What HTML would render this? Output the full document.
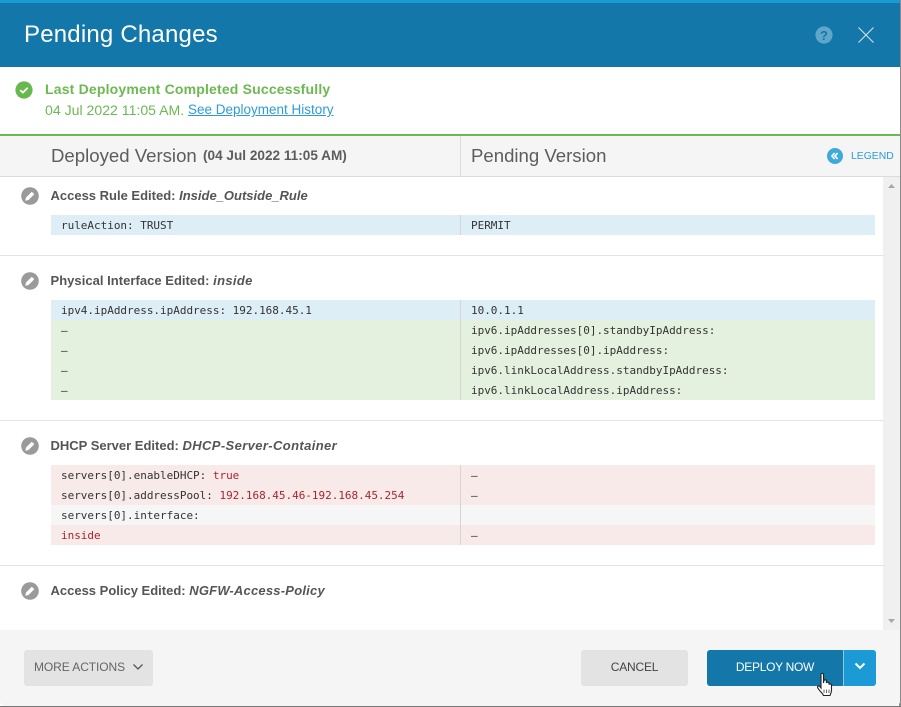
<!DOCTYPE html>
<html>
<head>
<meta charset="utf-8">
<style>
html,body{margin:0;padding:0;width:901px;height:707px;overflow:hidden;background:#fff;font-family:"Liberation Sans",sans-serif}
*{box-sizing:border-box}
.a{position:absolute;white-space:nowrap}
#dlg{position:absolute;left:0;top:0;width:900px;height:706px;background:#fff;overflow:hidden;border-radius:0 0 5px 5px}
.row{position:absolute;left:51px;width:824px;height:20px;font:11px/20px "DejaVu Sans Mono","Liberation Mono",monospace;color:#333}
.row span{position:absolute;top:1px;white-space:pre}
.row .l{left:10px;letter-spacing:-.02px}
.row .r{left:420px;letter-spacing:-.02px}
.row i{position:absolute;left:409px;top:0;width:1px;height:20px;background:#d5d5d5}
.row b{font-weight:normal;color:#a8252f}
.b{background:#deeef7}.g{background:#e5f1df}.p{background:#f9eaea}.w{background:#f6f6f6}
.h{position:absolute;left:50.500px;font-size:13px;font-weight:bold;color:#555;white-space:nowrap;line-height:16px}
.h em{font-style:italic}
.sep{position:absolute;left:0;width:884px;height:1px;background:#e3e3e3}
.ic{position:absolute;left:21px;width:18px;height:18px}
.btn{position:absolute;top:650px;height:36px;border-radius:3px;font-size:12px;line-height:34px;text-align:center}
</style>
</head>
<body>
<div style="position:absolute;left:899px;top:0;width:2px;height:707px;background:#8a8a8a"></div>
<div style="position:absolute;left:0;top:706px;width:901px;height:1px;background:#777"></div>
<div id="dlg">
  <div class="a" style="left:0;top:0;width:900px;height:3px;background:#1c9ad6"></div>
  <div class="a" style="left:0;top:3px;width:900px;height:64px;background:#1377a9"></div>
  <div class="a" style="left:24px;top:20px;font-size:24px;line-height:30px;color:#fff;letter-spacing:.2px">Pending Changes</div>
  <svg class="a" style="left:815px;top:26px" width="18" height="18" viewBox="0 0 18 18"><circle cx="9" cy="9" r="8.600" fill="#5fa6c9"/><text x="9" y="14" text-anchor="middle" font-family="Liberation Sans" font-weight="bold" font-size="13" fill="#1377a9">?</text></svg>
  <svg class="a" style="left:858px;top:27px" width="16" height="16" viewBox="0 0 16 16"><path d="M.5.5 15.500 15.500M15.500.5 .5 15.500" stroke="#cfe3ee" stroke-width="1.100" fill="none"/></svg>

  <svg class="a" style="left:15px;top:81px" width="18" height="18" viewBox="0 0 18 18"><circle cx="9" cy="9" r="8.600" fill="#67b84f"/><path d="M5.300 9.200 7.900 11.600 12.700 6.800" stroke="#fff" stroke-width="1.800" fill="none"/></svg>
  <div class="a" style="left:45px;top:81px;font-size:14px;font-weight:bold;line-height:16px;color:#6cb952;letter-spacing:.18px">Last Deployment Completed Successfully</div>
  <div class="a" style="left:45px;top:102px;font-size:14.100px;line-height:16px;color:#6cb952">04 Jul 2022 11:05 AM.</div>
  <div class="a" style="left:188px;top:102px;font-size:13.500px;line-height:16px;color:#2b9cd8;text-decoration:underline">See Deployment History</div>

  <div class="a" style="left:0;top:134px;width:900px;height:2px;background:#6cb952"></div>
  <div class="a" style="left:0;top:136px;width:900px;height:41px;background:#f5f5f5;border-bottom:1px solid #dcdcdc"></div>
  <div class="a" style="left:460px;top:136px;width:1px;height:40px;background:#dcdcdc"></div>
  <div class="a" style="left:51px;top:145px;font-size:18.600px;line-height:22px;color:#5c5c5c">Deployed Version</div>
  <div class="a" style="left:203px;top:148px;font-size:13.600px;line-height:16px;font-weight:bold;color:#5c5c5c">(04 Jul 2022 11:05 AM)</div>
  <div class="a" style="left:471px;top:145px;font-size:18.600px;line-height:22px;color:#5c5c5c">Pending Version</div>
  <svg class="a" style="left:827px;top:148px" width="16" height="16" viewBox="0 0 16 16"><circle cx="8" cy="8" r="8" fill="#3fa9dc"/><path d="M7.600 5 5 8 7.600 11M10.600 5 8 8 10.600 11" stroke="#fff" stroke-width="1.700" fill="none"/></svg>
  <div class="a" style="left:851px;top:150px;font-size:10.400px;line-height:14px;color:#2b9cd8">LEGEND</div>

  <div class="a" style="left:883px;top:177px;width:17px;height:453px;background:#f0f0f0"></div>
  <svg class="a" style="left:883px;top:182px" width="17" height="8" viewBox="0 0 17 8"><path d="M5 6 8.500 2 12 6Z" fill="#a8a8a8"/></svg>
  <svg class="a" style="left:883px;top:617px" width="17" height="8" viewBox="0 0 17 8"><path d="M5 2 8.500 6 12 2Z" fill="#a8a8a8"/></svg>

  <svg class="ic" style="top:187px" viewBox="0 0 18 18"><circle cx="9" cy="9" r="8.800" fill="#9a9a9a"/><path d="M4.300 13.700 5 10.500 10.800 4.700 13.300 7.200 7.500 13Z" fill="#fff"/></svg>
  <div class="h" style="top:188px">Access Rule Edited: <em>Inside_Outside_Rule</em></div>
  <div class="row b" style="top:215px"><span class="l">ruleAction: TRUST</span><i></i><span class="r">PERMIT</span></div>
  <div class="sep" style="top:255px"></div>

  <svg class="ic" style="top:272px" viewBox="0 0 18 18"><circle cx="9" cy="9" r="8.800" fill="#9a9a9a"/><path d="M4.300 13.700 5 10.500 10.800 4.700 13.300 7.200 7.500 13Z" fill="#fff"/></svg>
  <div class="h" style="top:273px;letter-spacing:.03px">Physical Interface Edited: <em style="letter-spacing:.33px">inside</em></div>
  <div class="row b" style="top:300px"><span class="l">ipv4.ipAddress.ipAddress: 192.168.45.1</span><i></i><span class="r">10.0.1.1</span></div>
  <div class="row g" style="top:320px"><span class="l">–</span><i></i><span class="r">ipv6.ipAddresses[0].standbyIpAddress:</span></div>
  <div class="row g" style="top:340px"><span class="l">–</span><i></i><span class="r">ipv6.ipAddresses[0].ipAddress:</span></div>
  <div class="row g" style="top:360px"><span class="l">–</span><i></i><span class="r">ipv6.linkLocalAddress.standbyIpAddress:</span></div>
  <div class="row g" style="top:380px"><span class="l">–</span><i></i><span class="r">ipv6.linkLocalAddress.ipAddress:</span></div>
  <div class="sep" style="top:420px"></div>

  <svg class="ic" style="top:437px" viewBox="0 0 18 18"><circle cx="9" cy="9" r="8.800" fill="#9a9a9a"/><path d="M4.300 13.700 5 10.500 10.800 4.700 13.300 7.200 7.500 13Z" fill="#fff"/></svg>
  <div class="h" style="top:438px">DHCP Server Edited: <em style="letter-spacing:.38px">DHCP-Server-Container</em></div>
  <div class="row p" style="top:465px"><span class="l">servers[0].enableDHCP: <b>true</b></span><i></i><span class="r">–</span></div>
  <div class="row p" style="top:485px"><span class="l">servers[0].addressPool: <b>192.168.45.46-192.168.45.254</b></span><i></i><span class="r">–</span></div>
  <div class="row w" style="top:505px"><span class="l">servers[0].interface:</span><i></i></div>
  <div class="row p" style="top:525px"><span class="l"><b>inside</b></span><i></i><span class="r">–</span></div>
  <div class="sep" style="top:565px"></div>

  <svg class="ic" style="top:582px" viewBox="0 0 18 18"><circle cx="9" cy="9" r="8.800" fill="#9a9a9a"/><path d="M4.300 13.700 5 10.500 10.800 4.700 13.300 7.200 7.500 13Z" fill="#fff"/></svg>
  <div class="h" style="top:583px">Access Policy Edited: <em style="letter-spacing:.22px">NGFW-Access-Policy</em></div>

  <div class="a" style="left:0;top:630px;width:900px;height:76px;background:#f5f5f5"></div>
  <div class="btn" style="left:24px;width:129px;background:#e3e3e3;color:#666;text-align:left;padding-left:10px;letter-spacing:-.08px">MORE ACTIONS</div>
  <svg class="a" style="left:132px;top:663px" width="12" height="8" viewBox="0 0 12 8"><path d="M1.500 1.500 6 6 10.500 1.500" stroke="#555" stroke-width="1.300" fill="none"/></svg>
  <div class="btn" style="left:581px;width:107px;background:#e3e3e3;color:#444;letter-spacing:-.2px">CANCEL</div>
  <div class="btn" style="left:707px;width:136px;background:#1377a9;color:#fff;border-radius:3px 0 0 3px;letter-spacing:-.3px">DEPLOY NOW</div>
  <div class="btn" style="left:843px;width:33px;background:#1c9ad6;border-left:1px solid #8cc8e6;border-radius:0 3px 3px 0"></div>
  <svg class="a" style="left:854px;top:662px" width="12" height="8" viewBox="0 0 12 8"><path d="M1.500 1.500 6 6 10.500 1.500" stroke="#fff" stroke-width="2" fill="none"/></svg>
  <svg class="a" style="left:816px;top:672px" width="20" height="26" viewBox="0 0 20 26"><path d="M5 2.500C5 1 7.500 1 7.500 2.500V11L8 8.500C8.500 7.500 10.300 7.500 10.500 9V11C11 9.800 12.800 10 13 11.300V12.500C13.500 11.500 15.300 11.800 15.500 13V18C15.500 20.500 14.500 22 14 23.500H7.500C6.500 21 3.500 19 1.800 16C1 14.500 2.500 13.300 3.800 14.500L5 16Z" fill="#fff" stroke="#222" stroke-width="1.100"/><path d="M8 17.500V21M10.500 17.500V21M13 17.500V21" stroke="#222" stroke-width=".7"/></svg>
</div>
</body>
</html>
